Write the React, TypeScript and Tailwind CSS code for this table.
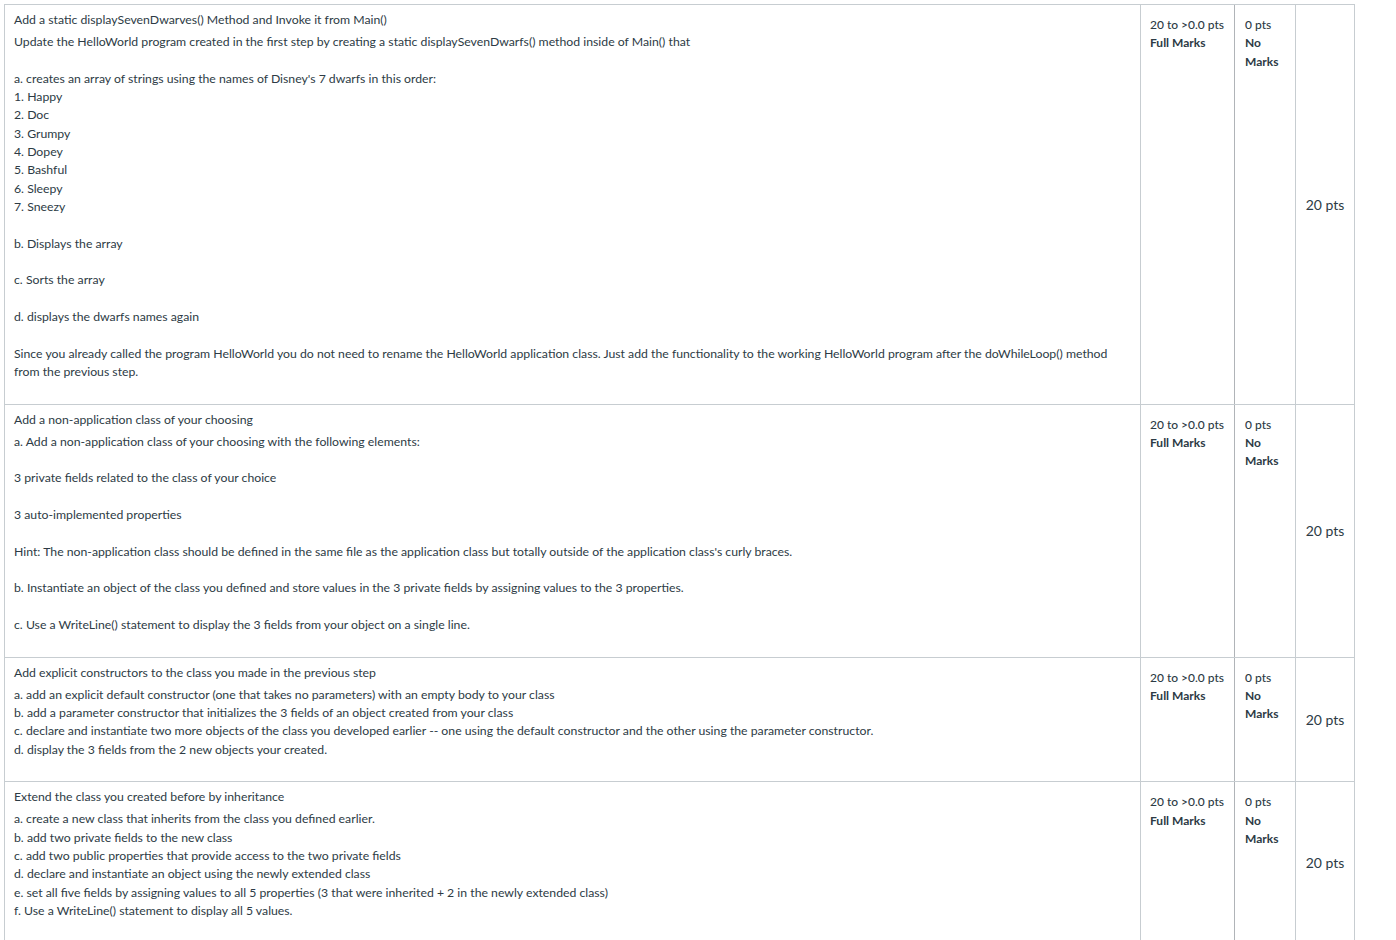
import React from 'react';

interface Criterion {
    title: string;
    lines: string[];
}

// blank string = empty line between paragraphs
const CRITERIA: Criterion[] = [
    {
        title: 'Add a static displaySevenDwarves() Method and Invoke it from Main()',
        lines: [
            'Update the HelloWorld program created in the first step by creating a static displaySevenDwarfs() method inside of Main() that',
            '',
            "a. creates an array of strings using the names of Disney's 7 dwarfs in this order:",
            '1. Happy',
            '2. Doc',
            '3. Grumpy',
            '4. Dopey',
            '5. Bashful',
            '6. Sleepy',
            '7. Sneezy',
            '',
            'b. Displays the array',
            '',
            'c. Sorts the array',
            '',
            'd. displays the dwarfs names again',
            '',
            'Since you already called the program HelloWorld you do not need to rename the HelloWorld application class. Just add the functionality to the working HelloWorld program after the doWhileLoop() method from the previous step.',
        ],
    },
    {
        title: 'Add a non-application class of your choosing',
        lines: [
            'a. Add a non-application class of your choosing with the following elements:',
            '',
            '3 private fields related to the class of your choice',
            '',
            '3 auto-implemented properties',
            '',
            "Hint: The non-application class should be defined in the same file as the application class but totally outside of the application class's curly braces.",
            '',
            'b. Instantiate an object of the class you defined and store values in the 3 private fields by assigning values to the 3 properties.',
            '',
            'c. Use a WriteLine() statement to display the 3 fields from your object on a single line.',
        ],
    },
    {
        title: 'Add explicit constructors to the class you made in the previous step',
        lines: [
            'a. add an explicit default constructor (one that takes no parameters) with an empty body to your class',
            'b. add a parameter constructor that initializes the 3 fields of an object created from your class',
            'c. declare and instantiate two more objects of the class you developed earlier -- one using the default constructor and the other using the parameter constructor.',
            'd. display the 3 fields from the 2 new objects your created.',
        ],
    },
    {
        title: 'Extend the class you created before by inheritance',
        lines: [
            'a. create a new class that inherits from the class you defined earlier.',
            'b. add two private fields to the new class',
            'c. add two public properties that provide access to the two private fields',
            'd. declare and instantiate an object using the newly extended class',
            'e. set all five fields by assigning values to all 5 properties (3 that were inherited + 2 in the newly extended class)',
            'f. Use a WriteLine() statement to display all 5 values.',
        ],
    },
];

const RubricRow: React.FC<{ criterion: Criterion }> = ({ criterion }) => (
    <div className="flex border-t border-[#c7cdd1]">
        <div className="w-[1136px] shrink-0 border-r border-[#c7cdd1] pl-[9px] pr-[9px] pt-[6px] pb-[22.3px] text-[12.25px] leading-[18.35px]">
            <div className="mb-[3.6px]">{criterion.title}</div>
            {criterion.lines.map((line, i) =>
                line === '' ? <div key={i} className="h-[18.35px]" /> : <div key={i}>{line}</div>
            )}
        </div>
        <div className="w-[94px] shrink-0 border-r border-[#b0b4b8] px-[9px] pt-[11px] text-[12px] leading-[18.35px]">
            <div className="whitespace-nowrap font-medium">20 to &gt;0.0 pts</div>
            <div className="font-bold">Full Marks</div>
        </div>
        <div className="w-[61px] shrink-0 border-r border-[#c7cdd1] pl-[10px] pr-[8px] pt-[11px] text-[12px] leading-[18.35px]">
            <div className="font-medium">0 pts</div>
            <div className="font-bold">No Marks</div>
        </div>
        <div className="w-[59px] shrink-0 border-r border-[#c7cdd1] flex items-center justify-center text-[14px]">
            20 pts
        </div>
    </div>
);

export default function App() {
    return (
        <div className="min-h-screen bg-white text-[#2d3b45]" style={{ fontFamily: 'Lato, "Open Sans", sans-serif' }}>
            <div className="pl-[4px] pt-[4px]">
                <div className="w-[1351px] border-l border-[#c7cdd1]">
                    {CRITERIA.map((c, i) => (
                        <RubricRow key={i} criterion={c} />
                    ))}
                </div>
            </div>
        </div>
    );
}
